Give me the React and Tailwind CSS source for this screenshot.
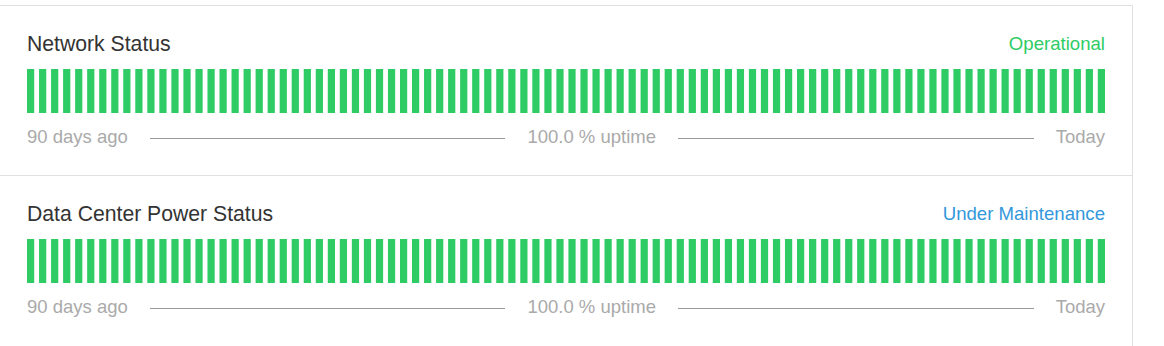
const components = [
  { name: "Network Status", status: "Operational", statusColor: "text-[#2fcc66]" },
  { name: "Data Center Power Status", status: "Under Maintenance", statusColor: "text-[#3498db]" },
];

const days = Array.from({ length: 90 }, (_, i) => i);

function UptimeBars() {
  return (
    <svg className="block w-full h-[44px]" viewBox="0 0 448 34" preserveAspectRatio="none">
      {days.map((i) => (
        <rect key={i} x={i * 5} y="0" width="3" height="34" fill="#2fcc66" />
      ))}
    </svg>
  );
}

function ComponentRow({ name, status, statusColor }) {
  return (
    <div className="border-t border-[#e0e0e0] pt-[22px] pb-[25.4px] pl-[27px] pr-[27px]">
      <div className="flex justify-between items-center leading-[31px]">
        <span className="text-[21.2px] text-[#333333]">{name}</span>
        <span className={`text-[18.6px] ${statusColor}`}>{status}</span>
      </div>
      <div className="mt-[10px]">
        <UptimeBars />
      </div>
      <div className="mt-[10px] flex items-center text-[18.5px] leading-[27px] text-[#aaaaaa]">
        <span>90 days ago</span>
        <div className="flex-1 mx-[22px] mt-[4px] h-px bg-[#999999]" />
        <span>100.0 % uptime</span>
        <div className="flex-1 mx-[22px] mt-[4px] h-px bg-[#999999]" />
        <span>Today</span>
      </div>
    </div>
  );
}

export default function App() {
  return (
    <div className="w-[1164px] h-[346px] bg-white overflow-hidden pt-[5px]" style={{ fontFamily: '"Liberation Sans", Arial, sans-serif' }}>
      <div className="w-[1133px] border-r border-[#e0e0e0] h-[400px]">
        {components.map((c) => (
          <ComponentRow key={c.name} {...c} />
        ))}
      </div>
    </div>
  );
}
